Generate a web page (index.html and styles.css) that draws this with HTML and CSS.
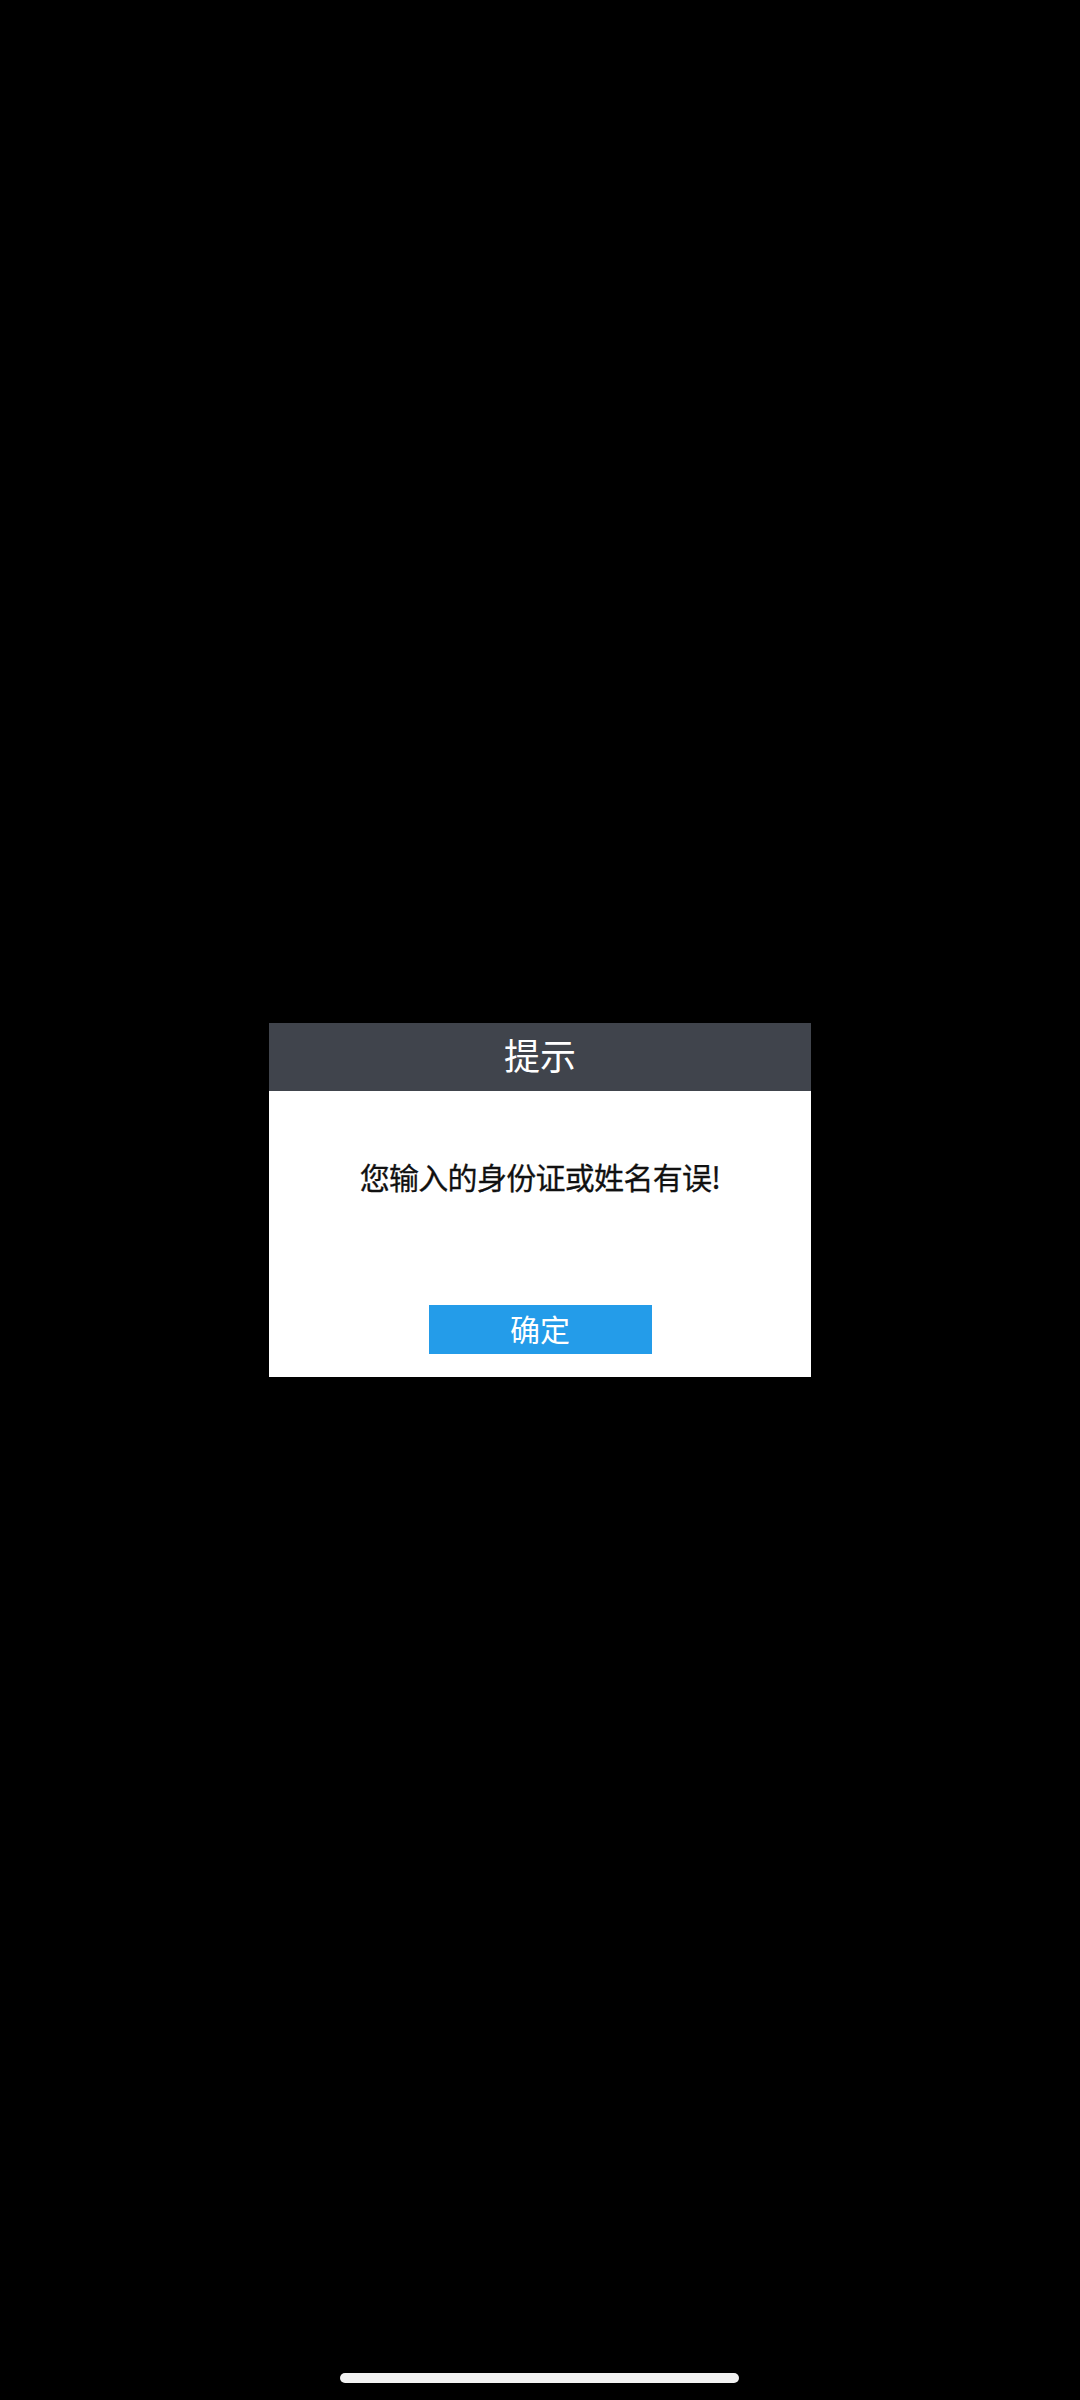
FILE: index.html
```html
<!DOCTYPE html>
<html lang="zh-CN">
<head>
<meta charset="utf-8">
<title>提示</title>
<link rel="stylesheet" href="styles.css">
</head>
<body>
<div class="screen">
  <div class="dialog">
    <div class="dialog-header">提示</div>
    <div class="dialog-body">
      <p class="message">您输入的身份证或姓名有误!</p>
      <button class="confirm">确定</button>
    </div>
  </div>
  <div class="home-indicator"></div>
</div>
</body>
</html>
```
FILE: styles.css
```css
html, body {
  margin: 0;
  padding: 0;
  background: #000;
}
body {
  font-family: "Noto Sans CJK SC", "Noto Sans", sans-serif;
}
.screen {
  width: 1080px;
  height: 2400px;
  display: flex;
  align-items: center;
  justify-content: center;
}
.dialog {
  width: 542px;
  background: #fff;
  display: flex;
  flex-direction: column;
}
.dialog-header {
  height: 62px;
  padding-bottom: 6px;
  background: #40444c;
  color: #fff;
  font-size: 36px;
  line-height: 62px;
  text-align: center;
}
.dialog-body {
  display: flex;
  flex-direction: column;
  align-items: center;
  padding: 65px 0 23px;
}
.message {
  margin: 0;
  font-size: 30px;
  line-height: 40px;
  color: #111;
  letter-spacing: -0.7px;
  -webkit-text-stroke: 0.3px #111;
}
.confirm {
  margin-top: 109px;
  width: 223px;
  height: 49px;
  border: none;
  padding: 0 0 2px;
  background: #249ce9;
  color: #fff;
  font-family: inherit;
  font-size: 30px;
  line-height: 47px;
}
.home-indicator {
  position: fixed;
  left: 340px;
  top: 2373px;
  width: 399px;
  height: 10px;
  border-radius: 5px;
  background: #f2f2f2;
}
```
